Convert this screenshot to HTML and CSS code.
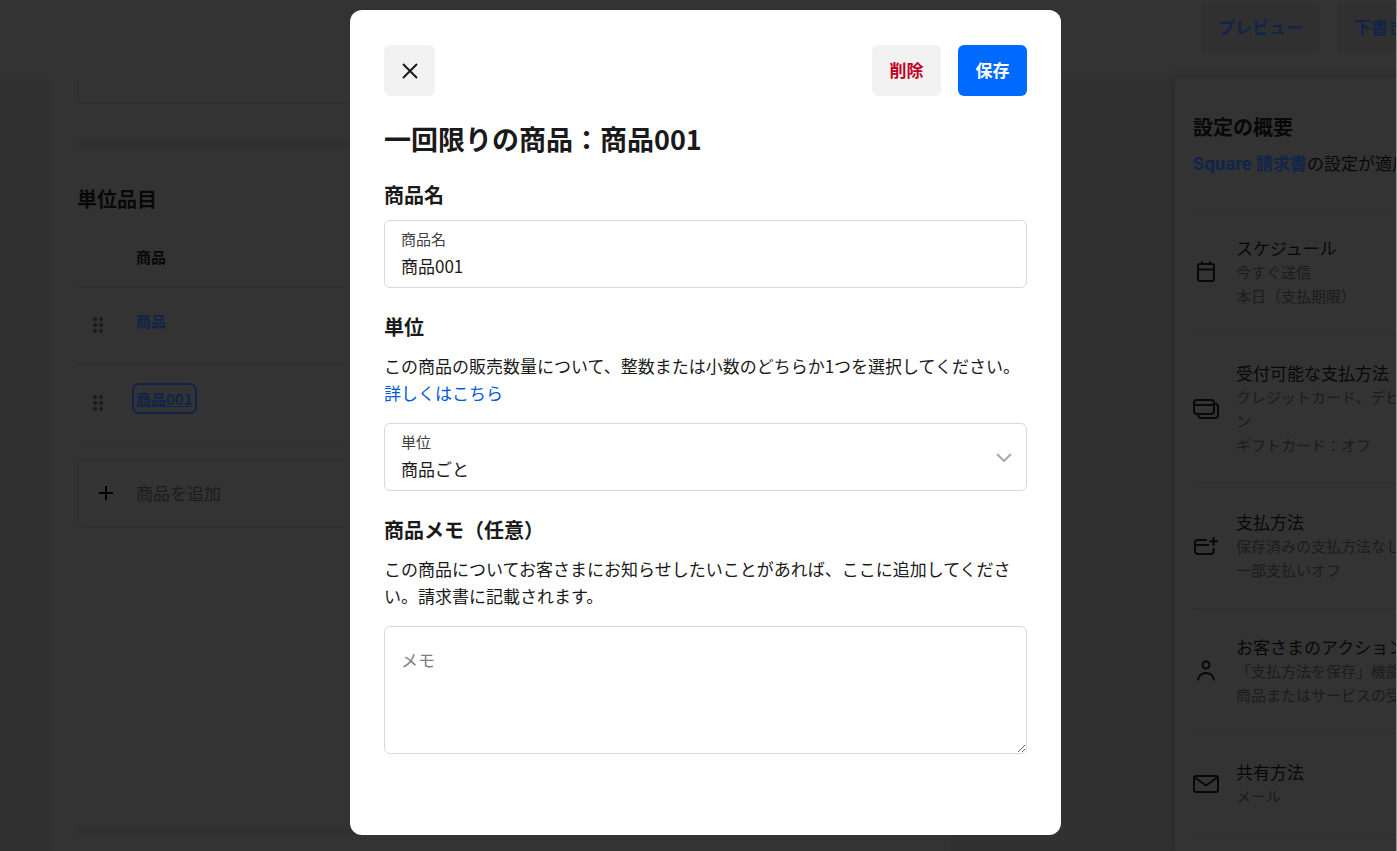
FILE: index.html
```html
<!DOCTYPE html>
<html lang="ja">
<head>
  <meta charset="UTF-8" />
  <meta name="viewport" content="width=device-width, initial-scale=1.0"/>
  <title>一回限りの商品</title>
  <link rel="stylesheet" href="styles.css">
</head>
<body>

  <div class="page">
    <header class="topbar">
      <button type="button" class="top-btn">プレビュー</button>
      <button type="button" class="top-btn">下書き</button>
    </header>

    <div class="columns">
      <main class="invoice">
        <div class="prev-box"></div>
        <div class="divider"></div>

        <h2>単位品目</h2>
        <table class="items">
          <thead>
            <tr><th class="handle"></th><th>商品</th></tr>
          </thead>
          <tbody>
            <tr>
              <td class="handle">
                <svg width="12" height="18" viewBox="0 0 12 18"><circle cx="3" cy="3" r="2"/><circle cx="9" cy="3" r="2"/><circle cx="3" cy="9" r="2"/><circle cx="9" cy="9" r="2"/><circle cx="3" cy="15" r="2"/><circle cx="9" cy="15" r="2"/></svg>
              </td>
              <td><a href="#">商品</a></td>
            </tr>
            <tr>
              <td class="handle">
                <svg width="12" height="18" viewBox="0 0 12 18"><circle cx="3" cy="3" r="2"/><circle cx="9" cy="3" r="2"/><circle cx="3" cy="9" r="2"/><circle cx="9" cy="9" r="2"/><circle cx="3" cy="15" r="2"/><circle cx="9" cy="15" r="2"/></svg>
              </td>
              <td><a href="#" class="focused">商品001</a></td>
            </tr>
          </tbody>
        </table>

        <button type="button" class="add-item">
          <svg width="16" height="16" viewBox="0 0 16 16"><path d="M8 1v14M1 8h14"/></svg>
          <span>商品を追加</span>
        </button>

        <div class="divider last"></div>
      </main>

      <aside class="summary">
        <div class="summary-head">
          <h2>設定の概要</h2>
          <p><a href="#" class="brand">Square 請求書</a>の設定が適用</p>
        </div>
        <ul>
          <li>
            <svg width="26" height="26" viewBox="0 0 26 26"><rect x="5" y="5" width="16" height="17" rx="2"/><path d="M5 10.500h16M9 2.500v3M17 2.500v3"/></svg>
            <div>
              <h3>スケジュール</h3>
              <p>今すぐ送信</p>
              <p>本日（支払期限）</p>
            </div>
          </li>
          <li>
            <svg width="26" height="26" viewBox="0 0 26 26"><rect x="1" y="4" width="20" height="14" rx="3"/><path d="M1 9h20M21 8h1.500a2.500 2.500 0 0 1 2.500 2.500V19a3 3 0 0 1-3 3H8a2.500 2.500 0 0 1-2.500-2.500V18"/></svg>
            <div>
              <h3>受付可能な支払方法</h3>
              <p>クレジットカード、デビ</p>
              <p>ン</p>
              <p>ギフトカード：オフ</p>
            </div>
          </li>
          <li>
            <svg width="26" height="26" viewBox="0 0 26 26"><path d="M14 7H4.500A2.500 2.500 0 0 0 2 9.500v9A2.500 2.500 0 0 0 4.500 21h13.500a2.500 2.500 0 0 0 2.500-2.500V15M2 12h14M20.500 4v8.500M16.300 8.200h8.500"/></svg>
            <div>
              <h3>支払方法</h3>
              <p>保存済みの支払方法なし</p>
              <p>一部支払いオフ</p>
            </div>
          </li>
          <li>
            <svg width="26" height="26" viewBox="0 0 26 26"><circle cx="13" cy="7" r="3.500"/><path d="M5 22.500c.4-4.600 3.600-7.500 8-7.500s7.600 2.900 8 7.500"/></svg>
            <div>
              <h3>お客さまのアクション</h3>
              <p>「支払方法を保存」機能</p>
              <p>商品またはサービスの受</p>
            </div>
          </li>
          <li>
            <svg width="26" height="26" viewBox="0 0 26 26"><rect x="1" y="5" width="24" height="16" rx="2"/><path d="M2 6.500l11 8 11-8"/></svg>
            <div>
              <h3>共有方法</h3>
              <p>メール</p>
            </div>
          </li>
        </ul>
      </aside>
    </div>
  </div>

  <div class="overlay">
    <form class="modal" role="dialog" aria-labelledby="modalTitle">
      <div class="modal-bar">
        <button type="button" class="btn close" aria-label="閉じる">
          <svg width="16" height="16" viewBox="0 0 16 16"><path d="M1 1l14 14M15 1L1 15"/></svg>
        </button>
        <button type="button" class="btn delete">削除</button>
        <button type="submit" class="btn save">保存</button>
      </div>

      <h1 id="modalTitle">一回限りの商品：商品001</h1>

      <h2>商品名</h2>
      <div class="field">
        <label for="itemName">商品名</label>
        <input type="text" id="itemName" value="商品001" />
      </div>

      <h2>単位</h2>
      <p>この商品の販売数量について、整数または小数のどちらか1つを選択してください。<a href="#">詳しくはこちら</a></p>
      <div class="field spaced">
        <label for="unit">単位</label>
        <select id="unit">
          <option>商品ごと</option>
        </select>
        <svg class="chevron" width="16" height="10" viewBox="0 0 16 10"><path d="M1 1l7 7 7-7"/></svg>
      </div>

      <h2>商品メモ（任意）</h2>
      <p>この商品についてお客さまにお知らせしたいことがあれば、ここに追加してください。請求書に記載されます。</p>
      <textarea class="spaced" id="memo" placeholder="メモ" aria-label="メモ"></textarea>
    </form>
  </div>

</body>
</html>
```
FILE: styles.css
```css
* {
  margin: 0;
  padding: 0;
  box-sizing: border-box;
}

html, body {
  height: 100%;
  overflow: hidden;
}

body, button, input, select, textarea {
  font-family: "Noto Sans CJK JP", sans-serif;
  font-size: 17px;
}

button {
  border: none;
  cursor: pointer;
}

svg {
  fill: none;
  stroke: currentColor;
  stroke-width: 2;
  flex: none;
}

/* dimmed page behind the dialog */
.page {
  height: 100vh;
  display: flex;
  flex-direction: column;
  background: #333;
  color: #080808;
  border-right: 1px solid #999;
  overflow: hidden;
}

.page a {
  color: #10244a;
  font-weight: bold;
  text-decoration: none;
}

.page a.brand {
  font-family: Inter, "Noto Sans CJK JP", sans-serif;
}

.page h2 {
  font-size: 20px;
  line-height: 26px;
}

.topbar {
  height: 78px;
  flex: none;
  display: flex;
  justify-content: flex-end;
  align-items: flex-start;
  gap: 17px;
  padding-top: 2px;
  margin-right: -26px;
}

.top-btn {
  height: 51px;
  flex: none;
  padding: 0 17px 2px;
  border-radius: 6px;
  background: #303030;
  color: #10244a;
  font-weight: bold;
}

.columns {
  flex: 1;
  min-height: 0;
  display: flex;
  justify-content: space-between;
  padding-left: 51px;
  background: #313131;
}

.invoice {
  flex: 0 1 900px;
  display: flex;
  flex-direction: column;
  padding: 0 26px 16px;
  background: #333;
}

.prev-box {
  height: 26px;
  border: 1px solid #2d2d2d;
  border-top: none;
  border-radius: 0 0 6px 6px;
}

.divider {
  height: 8px;
  margin: 36px 0 38px;
  background: #303030;
}

.divider.last {
  margin: auto 0 0;
}

.items {
  width: 100%;
  margin-top: 17px;
  border-collapse: collapse;
  font-size: 15px;
  line-height: 24px;
}

.items th,
.items td {
  text-align: left;
  vertical-align: top;
  border-bottom: 1px solid #2d2d2d;
}

.items tr:last-child td {
  border-bottom-color: #303030;
}

.items th {
  height: 57px;
  padding-top: 16px;
}

.items td {
  height: 78px;
  padding-top: 22px;
}

.items .handle {
  width: 59px;
  padding-left: 15px;
}

.handle svg {
  margin-top: 7px;
  fill: #1c1c1c;
  stroke: none;
}

.items .focused {
  padding: 1px 0;
  text-decoration: underline;
  outline: 2px solid #10244a;
  outline-offset: 2px;
  border-radius: 3px;
}

.add-item {
  height: 68px;
  margin-top: 16px;
  display: flex;
  align-items: center;
  gap: 22px;
  padding-left: 20px;
  background: none;
  border: 1px solid #2d2d2d;
  border-radius: 6px;
  color: #000;
}

.add-item span {
  color: #1c1c1c;
}

.summary {
  flex: 0 0 256px;
  margin-right: -35px;
  padding: 0 17px 0 18px;
  background: #333;
  box-shadow: 0 0 10px rgba(0, 0, 0, 0.25);
  white-space: nowrap;
}

.summary-head {
  height: 132px;
  padding-top: 36px;
  border-bottom: 1px solid #303030;
}

.summary-head p {
  margin-top: 10px;
  line-height: 26px;
}

.summary li {
  display: flex;
  align-items: center;
  gap: 17px;
  padding: 26px 0;
  border-bottom: 1px solid #2e2e2e;
  list-style: none;
  line-height: 24px;
}

.summary h3 {
  font-size: 17px;
  font-weight: normal;
}

.summary li p {
  font-size: 15px;
  color: #1c1c1c;
}

/* dialog */
.overlay {
  position: fixed;
  inset: 0;
  display: flex;
  justify-content: center;
  padding: 10px 0 16px 14px;
}

.modal {
  width: 100%;
  max-width: 711px;
  padding: 35px 34px;
  border-radius: 12px;
  background: #fff;
  color: #1a1a1a;
  overflow: auto;
}

.modal-bar {
  display: flex;
  gap: 17px;
}

.btn {
  height: 51px;
  min-width: 69px;
  padding: 0 17px 2px;
  border-radius: 6px;
  background: #f2f2f2;
  font-weight: bold;
}

.close {
  min-width: 51px;
  margin-right: auto;
  padding: 0;
  color: #1a1a1a;
  line-height: 0;
}

.delete {
  color: #bf0020;
}

.save {
  background: #006aff;
  color: #fff;
}

.modal h1 {
  margin-top: 26px;
  font-size: 27px;
  line-height: 34px;
}

.modal h2 {
  margin: 26px 0 12px;
  font-size: 20px;
  line-height: 26px;
}

.modal p {
  line-height: 27px;
}

.modal a {
  color: #005ad9;
  text-decoration: none;
}

.field {
  position: relative;
  display: flex;
  flex-direction: column;
  gap: 2px;
  padding: 7px 16px 9px;
  border: 1px solid #d9d9d9;
  border-radius: 6px;
}

.spaced {
  margin-top: 17px;
}

.field label {
  font-size: 15px;
  line-height: 22px;
  color: #404040;
}

.field input,
.field select {
  height: 26px;
  border: none;
  outline: none;
  background: none;
  color: #1a1a1a;
  appearance: none;
}

.chevron {
  position: absolute;
  right: 14px;
  top: 29px;
  color: #aaa;
  pointer-events: none;
}

textarea {
  display: block;
  width: 100%;
  height: 128px;
  padding: 20px 16px;
  border: 1px solid #d9d9d9;
  border-radius: 6px;
  line-height: 26px;
  resize: vertical;
}

textarea::placeholder {
  color: #808080;
}
```
